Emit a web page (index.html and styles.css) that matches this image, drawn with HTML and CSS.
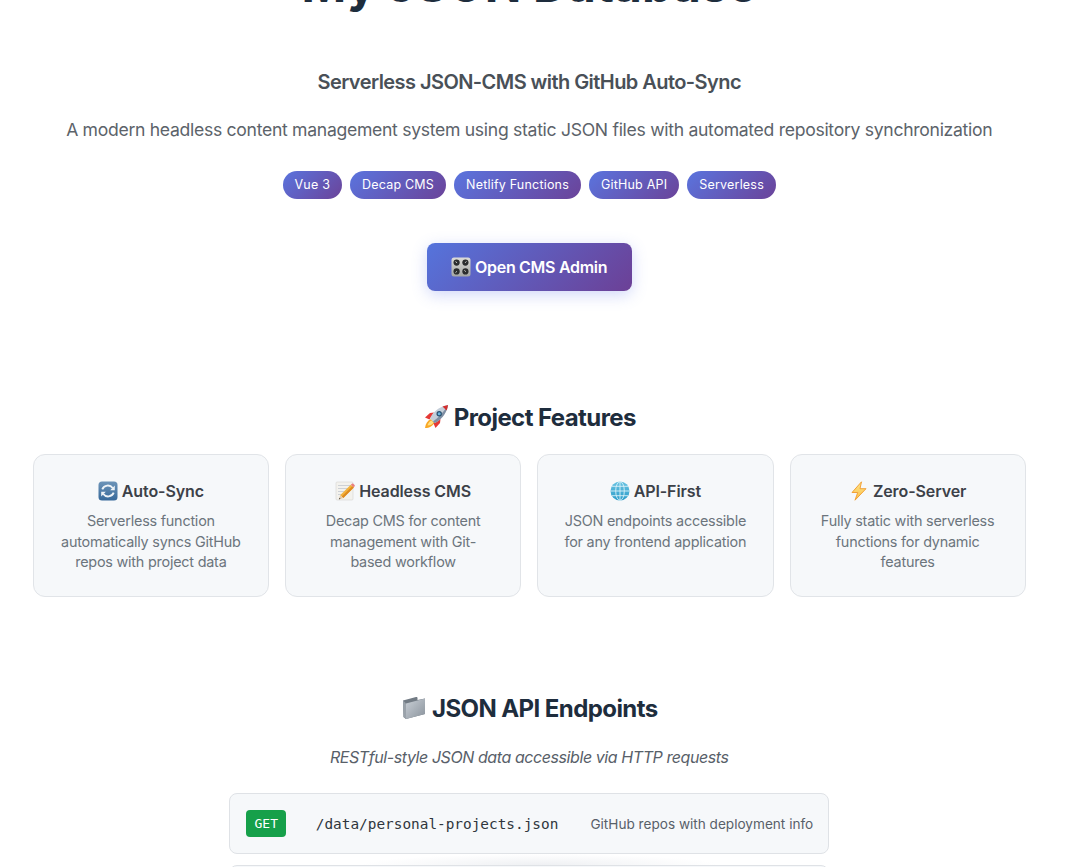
FILE: index.html
```html
<!DOCTYPE html>
<html lang="en">
<head>
<meta charset="utf-8">
<title>My JSON Database</title>
<link rel="stylesheet" href="styles.css">
</head>
<body>
<svg class="sprite" aria-hidden="true">
  <defs>
    <linearGradient id="g-knob" x1="0" y1="0" x2="0" y2="1"><stop offset="0" stop-color="#dcdcd8"/><stop offset="1" stop-color="#a4a6a4"/></linearGradient>
    <linearGradient id="g-sync" x1="0" y1="0" x2="0" y2="1"><stop offset="0" stop-color="#6d94b8"/><stop offset="1" stop-color="#37699a"/></linearGradient>
    <linearGradient id="g-globe" x1="0" y1="0" x2="0" y2="1"><stop offset="0" stop-color="#69c3e2"/><stop offset="1" stop-color="#2c9cc9"/></linearGradient>
    <linearGradient id="g-folder" x1="0" y1="0" x2="1" y2="1"><stop offset="0" stop-color="#c9cfd6"/><stop offset="1" stop-color="#8a939c"/></linearGradient>
    <linearGradient id="g-zap" x1="0" y1="0" x2="0" y2="1"><stop offset="0" stop-color="#fde68a"/><stop offset="1" stop-color="#fbbf4a"/></linearGradient>
  </defs>
  <symbol id="i-knobs" viewBox="0 0 20 20">
    <rect x="0.5" y="0.5" width="19" height="19" rx="2.5" fill="url(#g-knob)"/>
    <circle cx="5.6" cy="5.6" r="3.1" fill="#2b2d2e"/><circle cx="14.4" cy="5.6" r="3.1" fill="#2b2d2e"/>
    <circle cx="5.6" cy="14.4" r="3.1" fill="#2b2d2e"/><circle cx="14.4" cy="14.4" r="3.1" fill="#2b2d2e"/>
    <path d="M4.5 4.6l1.6 1.2M15.4 4.4l-1.2 1.4M4.5 15.6l1.4-1.2M13.4 13.4l1.4 1.2" stroke="#d8d8d4" stroke-width="1" fill="none"/>
  </symbol>
  <symbol id="i-rocket" viewBox="0 0 26 26">
    <path d="M2 24c.5-4.500 2.500-7.500 6-9l3.500 3.500c-1.500 3.500-5 5.500-9.500 5.500z" fill="#f9a825"/>
    <path d="M4.500 21.500c.7-2.500 2-4 4-5l2 2c-1 2-3 3-6 3z" fill="#ffe082"/>
    <path d="M2 13.500l5-4.500 4-.5-4.500 7z" fill="#e53935"/>
    <path d="M12.500 24l4.500-5 .5-4-7 4.500z" fill="#e53935"/>
    <path d="M7 14.500C9.500 8.500 16 2.500 25 1 23.500 10 17.500 16.500 11.500 19z" fill="#c4ced9"/>
    <path d="M25 1C23.500 10 17.500 16.500 11.500 19l-1.500-1.500C15 14 21 8 25 1z" fill="#7f8ea3"/>
    <path d="M19.500 2.500C21.300 1.800 23 1.400 25 1c-.3 2-.7 3.600-1.300 5.500z" fill="#d32f2f"/>
    <circle cx="16.200" cy="9.800" r="2.700" fill="#27506f"/>
    <circle cx="16.200" cy="9.800" r="1.500" fill="#6db4dc"/>
  </symbol>
  <symbol id="i-sync" viewBox="0 0 20 20">
    <rect x="0.500" y="0.500" width="19" height="19" rx="3.500" fill="url(#g-sync)"/>
    <path d="M4.300 8.300A6 6 0 0 1 14.700 7" fill="none" stroke="#eef3f7" stroke-width="1.900"/>
    <path d="M15.700 11.700A6 6 0 0 1 5.300 13" fill="none" stroke="#eef3f7" stroke-width="1.900"/>
    <path d="M16.800 4.600v4.600h-4.600zM3.200 15.400v-4.600h4.600z" fill="#eef3f7"/>
  </symbol>
  <symbol id="i-memo" viewBox="0 0 20 20">
    <rect x="1" y="1" width="17" height="18" rx="1" fill="#f3f2ee" stroke="#cfcfca" stroke-width=".5"/>
    <path d="M3 4.500h13M3 7.500h13M3 10.500h9M3 13.500h6" stroke="#c3c8cf" stroke-width=".8" fill="none"/>
    <path d="M15.800 3.800l3 2.700-10.500 10.500-3.200-2.800z" fill="#f3b23c"/>
    <path d="M17.300 5.200l1.500 1.300-10.500 10.500-1.500-1.400z" fill="#dd8a1f"/>
    <path d="M15.800 3.800l1.100-1.100c.4-.4 1-.4 1.400 0l1.300 1.200c.4.400.4 1 0 1.400l-.8 1.200z" fill="#e98080"/>
    <path d="M5.100 14.200l3.200 2.800-4.400 1.500z" fill="#e7c9a2"/>
    <path d="M4.500 16.800l1 .9-1.600.8z" fill="#3b3b3b"/>
  </symbol>
  <symbol id="i-globe" viewBox="0 0 20 20">
    <circle cx="10" cy="10" r="9.500" fill="url(#g-globe)"/>
    <g fill="none" stroke="#d8f1f8" stroke-width=".9">
      <ellipse cx="10" cy="10" rx="4.300" ry="9.300"/>
      <path d="M10 .5v19M.5 10h19M2 5.300h16M2 14.700h16"/>
    </g>
  </symbol>
  <symbol id="i-zap" viewBox="0 0 20 20">
    <path d="M12.500.8L3 11.500h5.700L6 19.200 17 7.700h-6z" fill="url(#g-zap)" stroke="#f09a2a" stroke-width=".9" stroke-linejoin="round"/>
  </symbol>
  <symbol id="i-folder" viewBox="0 0 26 26">
    <path d="M2 5.500L15 2c1-.3 1.500.2 1.500 1v2L24 3.500v15.500L5 24 2.500 22z" fill="#727b84"/>
    <path d="M5 8.500L24 3.500V19L5 24z" fill="url(#g-folder)"/>
    <path d="M2 5.500L5 8.500V24l-2.500-2z" fill="#9aa2aa"/>
  </symbol>
</svg>

<main class="page">
  <header class="hero">
    <h1 class="title">My JSON Database</h1>
    <h2 class="subtitle">Serverless JSON-CMS with GitHub Auto-Sync</h2>
    <p class="lead">A modern headless content management system using static JSON files with automated repository synchronization</p>
    <div class="tags">
      <span class="tag">Vue 3</span>
      <span class="tag">Decap CMS</span>
      <span class="tag">Netlify Functions</span>
      <span class="tag">GitHub API</span>
      <span class="tag">Serverless</span>
    </div>
    <a class="cta" href="#"><svg class="emoji emoji-cta"><use href="#i-knobs"/></svg> Open CMS Admin</a>
  </header>

  <section class="features">
    <h2 class="section-title"><svg class="emoji emoji-lg"><use href="#i-rocket"/></svg> Project Features</h2>
    <div class="feature-grid">
      <article class="card">
        <h3 class="card-title"><svg class="emoji emoji-sm"><use href="#i-sync"/></svg> Auto-Sync</h3>
        <p class="card-text">Serverless function automatically syncs GitHub repos with project data</p>
      </article>
      <article class="card">
        <h3 class="card-title"><svg class="emoji emoji-sm"><use href="#i-memo"/></svg> Headless CMS</h3>
        <p class="card-text">Decap CMS for content management with Git-based workflow</p>
      </article>
      <article class="card">
        <h3 class="card-title"><svg class="emoji emoji-sm"><use href="#i-globe"/></svg> API-First</h3>
        <p class="card-text">JSON endpoints accessible for any frontend application</p>
      </article>
      <article class="card">
        <h3 class="card-title"><svg class="emoji emoji-sm"><use href="#i-zap"/></svg> Zero-Server</h3>
        <p class="card-text">Fully static with serverless functions for dynamic features</p>
      </article>
    </div>
  </section>

  <section class="endpoints">
    <h2 class="section-title"><svg class="emoji emoji-lg"><use href="#i-folder"/></svg> JSON API Endpoints</h2>
    <p class="endpoints-note">RESTful-style JSON data accessible via HTTP requests</p>
    <div class="endpoint-list">
      <div class="endpoint">
        <span class="method">GET</span>
        <code class="path">/data/personal-projects.json</code>
        <span class="endpoint-desc">GitHub repos with deployment info</span>
      </div>
      <div class="endpoint endpoint-next"></div>
    </div>
  </section>
</main>
</body>
</html>
```

FILE: styles.css
```css
* {
  box-sizing: border-box;
}

html,
body {
  height: 867px;
  margin: 0;
  overflow: hidden;
  background: #ffffff;
}

body {
  font-family: Inter, "Liberation Sans", sans-serif;
  color: #1e2a3a;
}

.sprite {
  position: absolute;
  width: 0;
  height: 0;
  overflow: hidden;
}

.page {
  width: 1059px;
  padding: 0 33.25px 0 32.75px;
}

.emoji {
  display: inline-block;
  flex: none;
}

.emoji-cta {
  width: 20px;
  height: 20px;
  vertical-align: -4px;
}

.emoji-lg {
  width: 26px;
  height: 26px;
  vertical-align: -4px;
}

.emoji-sm {
  width: 20px;
  height: 20px;
  vertical-align: -4px;
}

.hero {
  display: flex;
  flex-direction: column;
  align-items: center;
  text-align: center;
}

.title {
  margin: -44px 0 0;
  font-size: 48px;
  line-height: 58px;
  font-weight: 700;
  letter-spacing: 0.2px;
  color: #1e2d3d;
}

.subtitle {
  margin: 54px 0 0;
  font-size: 20px;
  line-height: 28px;
  font-weight: 600;
  letter-spacing: -0.56px;
  color: #495057;
}

.lead {
  margin: 20px 0 0;
  font-size: 17.6px;
  line-height: 28px;
  font-weight: 400;
  letter-spacing: -0.3px;
  color: #5c636a;
}

.tags {
  display: flex;
  justify-content: center;
  gap: 8px;
  margin-top: 27px;
}

.tag {
  height: 28px;
  padding: 0 12px;
  border-radius: 14px;
  background: linear-gradient(135deg, #5a74de, #6b4399);
  color: #ffffff;
  font-size: 12.5px;
  font-weight: 400;
  letter-spacing: 0.2px;
  line-height: 28px;
}

.cta {
  display: block;
  width: 205px;
  height: 48px;
  margin-top: 44px;
  border-radius: 8px;
  background: linear-gradient(135deg, #5574dc, #6c4096);
  box-shadow: 0 4px 15px rgba(102, 126, 234, 0.3);
  color: #ffffff;
  font-size: 16px;
  font-weight: 600;
  letter-spacing: -0.3px;
  line-height: 48px;
  text-decoration: none;
}

.features {
  margin-top: 112px;
}

.section-title {
  margin: 0;
  font-size: 24px;
  line-height: 30px;
  font-weight: 700;
  letter-spacing: -0.58px;
  text-align: center;
  color: #1e2d3d;
}

.feature-grid {
  display: grid;
  grid-template-columns: repeat(4, 1fr);
  gap: 16px;
  margin-top: 21px;
}

.card {
  height: 143px;
  padding: 24px 24px 0;
  border: 1px solid #e1e4e8;
  border-radius: 12px;
  background: #f6f8fa;
  text-align: center;
}

.card-title {
  margin: 0;
  font-size: 16px;
  line-height: 24px;
  font-weight: 600;
  letter-spacing: -0.1px;
  color: #3c4148;
}

.card-text {
  margin: 8px 0 0;
  font-size: 14.4px;
  line-height: 20.5px;
  letter-spacing: -0.22px;
  color: #6c757d;
}

.endpoints {
  margin-top: 97px;
}

.endpoints-note {
  margin: 21px 0 0;
  font-size: 16px;
  line-height: 24px;
  font-style: italic;
  letter-spacing: -0.42px;
  text-align: center;
  color: #586069;
}

.endpoint-list {
  display: flex;
  flex-direction: column;
  gap: 11px;
  width: 600px;
  margin: 24px auto 0;
}

.endpoint {
  position: relative;
  display: flex;
  align-items: center;
  height: 61px;
  padding: 0 15px 0 16px;
  border: 1px solid #dfe2e6;
  border-radius: 8px;
  background: #f6f8fa;
}

.endpoint-next::before {
  content: "";
  position: absolute;
  top: -12px;
  left: 130px;
  width: 360px;
  height: 11px;
  background: radial-gradient(ellipse at 50% 100%, rgba(225, 228, 233, 0.55), rgba(225, 228, 233, 0) 70%);
}

.method {
  width: 40px;
  height: 27px;
  margin-right: 29.500px;
  border-radius: 4px;
  background: #16a04a;
  color: #ffffff;
  font-family: "DejaVu Sans Mono", monospace;
  font-size: 13px;
  line-height: 27px;
  text-align: center;
}

.path {
  font-family: "DejaVu Sans Mono", monospace;
  font-size: 14.4px;
  color: #2f363d;
}

.endpoint-desc {
  margin-left: auto;
  font-size: 13.6px;
  color: #586069;
}
```
